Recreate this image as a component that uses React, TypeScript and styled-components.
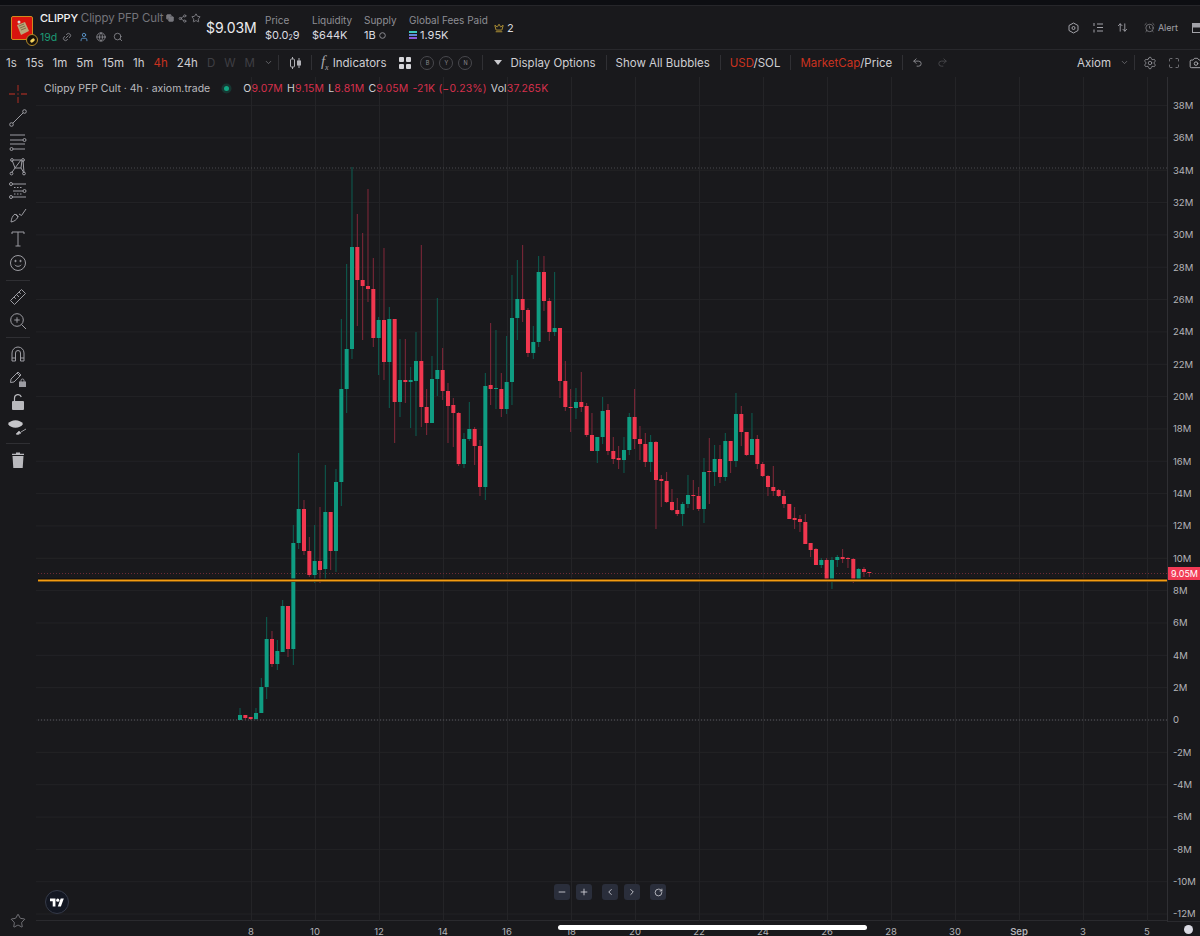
import styled, {createGlobalStyle} from "styled-components";
import {
    AlarmClock, ArrowUpDown, Camera, ChevronDown, ChevronLeft, ChevronRight, Copy, Crown, Globe, Link2,
    Maximize, Minus, Plus, RotateCw, Search, Settings, Share2, Star, Undo2, Redo2, User,
} from "lucide-react";
import {ReactNode} from "react";

const GlobalStyle = createGlobalStyle`
  html, body {
    margin: 0;
    padding: 0;
    background: #19191c;
  }

  body {
    font-family: "Inter", "Liberation Sans", sans-serif;
    overflow: hidden;
  }
`;

const StyledPage = styled.div`
  width: 1200px;
  height: 936px;
  display: flex;
  flex-direction: column;
  background: #19191c;
  color: #d6d6da;
  overflow: hidden;
  position: relative;
`;

const StyledTopStrip = styled.div`
  height: 6px;
  background: #0d0e12;
  border-bottom: 1px solid #26262a;
  box-sizing: border-box;
`;

const StyledHeader = styled.div`
  height: 44px;
  box-sizing: border-box;
  display: flex;
  align-items: center;
  padding-left: 11px;
  border-bottom: 1px solid #28282c;
`;

const StyledLogoWrap = styled.div`
  position: relative;
  width: 22px;
  height: 24px;
  margin-right: 7px;
  margin-top: 1px;
`;

const StyledLogoBadge = styled.div`
  position: absolute;
  right: -5px;
  bottom: -6px;
  width: 10px;
  height: 10px;
  border-radius: 50%;
  background: #18120a;
  border: 1px solid #b58a2a;
  display: flex;
  align-items: center;
  justify-content: center;

  &::after {
    content: "";
    width: 5px;
    height: 3px;
    border-radius: 2px;
    background: #f4d35e;
    transform: rotate(-40deg);
  }
`;

const StyledToken = styled.div`
  width: 166px;
  display: flex;
  flex-direction: column;
  gap: 5px;
`;

const StyledTokenRow = styled.div`
  display: flex;
  align-items: center;
  height: 14px;
  font-size: 11px;
  white-space: nowrap;
`;

const StyledTicker = styled.span`
  color: #f1f1f3;
  font-weight: 500;
  letter-spacing: -0.2px;
  margin-right: 3px;
`;

const StyledTokenName = styled.span`
  color: #74747a;
  margin-right: 2px;
  font-size: 11.5px;
  letter-spacing: -0.1px;
`;

const StyledAge = styled.span`
  color: #1c9c76;
  font-size: 10.5px;
  margin-right: 5px;
`;

const StyledTokenIcon = styled.span<{ $color?: string; $gap?: number }>`
  display: inline-flex;
  color: ${props => props.$color || "#8a8a90"};
  margin-right: ${props => props.$gap ?? 6}px;
`;

const StyledMarketCap = styled.div`
  width: 59px;
  font-size: 14px;
  color: #ececef;
  letter-spacing: -0.1px;
`;

const StyledStat = styled.div<{ $width: number }>`
  width: ${props => props.$width}px;
  display: flex;
  flex-direction: column;
  gap: 3px;
`;

const StyledStatLabel = styled.div`
  font-size: 10px;
  line-height: 12px;
  color: #8e8e94;
`;

const StyledStatValue = styled.div`
  font-size: 11px;
  line-height: 13px;
  color: #dcdce0;
  display: flex;
  align-items: center;
  gap: 3px;
  white-space: nowrap;

  sub {
    font-size: 7px;
    line-height: 0;
    margin: 0;
    vertical-align: -1px;
  }
`;

const StyledCrownCount = styled.div`
  display: flex;
  align-items: center;
  gap: 3px;
  font-size: 11px;
  color: #d8d8dc;
`;

const StyledHeaderRight = styled.div`
  margin-left: auto;
  display: flex;
  align-items: center;
  color: #a2a2a8;
  font-size: 9px;
  margin-right: -2px;
`;

const StyledHeaderIcon = styled.span<{ $gap: number }>`
  display: inline-flex;
  margin-right: ${props => props.$gap}px;
`;

const StyledToolbar = styled.div`
  height: 27px;
  box-sizing: border-box;
  padding: 0 0 2px 6px;
  display: flex;
  align-items: center;
  font-size: 11.5px;
  color: #cfcfd3;
  white-space: nowrap;
`;

const StyledIntervals = styled.div`
  display: flex;
  align-items: center;
  gap: 9px;
`;

const StyledInterval = styled.span<{ $state?: "active" | "dim" }>`
  color: ${props => props.$state === "active" ? "#c9321f" : props.$state === "dim" ? "#3f3f44" : "#cfcfd3"};
`;

const StyledSep = styled.span<{ $left: number; $right: number }>`
  width: 1px;
  height: 15px;
  background: #303034;
  margin: 0 ${props => props.$right}px 0 ${props => props.$left}px;
`;

const StyledFx = styled.span`
  font-family: "Liberation Serif", serif;
  font-style: italic;
  font-size: 15px;
  color: #a8a8ae;
  margin-right: 4px;
  line-height: 1;
`;

const StyledHotkey = styled.span`
  width: 14px;
  height: 14px;
  box-sizing: border-box;
  border: 1px solid #48484d;
  border-radius: 50%;
  font-size: 5.5px;
  color: #8b8b90;
  display: flex;
  align-items: center;
  justify-content: center;
  margin-right: 5px;
`;

const StyledCaret = styled.span`
  width: 0;
  height: 0;
  border-left: 4px solid transparent;
  border-right: 4px solid transparent;
  border-top: 5px solid #c9c9cd;
  margin-right: 8px;
`;

const StyledRed = styled.span`
  color: #c9321f;
`;

const StyledToolbarRight = styled.div`
  margin-left: auto;
  display: flex;
  align-items: center;
  margin-right: -3px;
`;

const StyledBody = styled.div`
  flex: 1;
  display: grid;
  grid-template-columns: 36px 1131px 33px;
  grid-template-rows: 844px 15px;
`;

const StyledRail = styled.div`
  grid-row: 1 / 3;
  display: flex;
  flex-direction: column;
  align-items: center;
  padding-top: 5px;
  color: #9c9ca2;
  position: relative;
`;

const StyledRailIcon = styled.div`
  width: 36px;
  height: 24.2px;
  display: flex;
  align-items: center;
  justify-content: center;
`;

const StyledRailSep = styled.div`
  width: 24px;
  height: 1px;
  background: #2f2f33;
  margin: 4px 0 4px;
`;

const StyledRailStar = styled.div`
  position: absolute;
  left: 10px;
  top: 836px;
  color: #9c9ca2;
  display: flex;
`;

const StyledPane = styled.div`
  position: relative;
  border-bottom: 1px solid #2a2a2e;
  box-sizing: content-box;

  svg.chart {
    display: block;
  }
`;

const StyledLegend = styled.div`
  position: absolute;
  left: 8px;
  top: 5px;
  display: flex;
  align-items: center;
  font-size: 10.5px;
  line-height: 13px;
  color: #b9b9be;
  white-space: nowrap;
`;

const StyledLegendDot = styled.span`
  width: 5px;
  height: 5px;
  border-radius: 50%;
  background: #12a582;
  box-shadow: 0 0 0 2.5px rgba(18, 165, 130, 0.22);
  margin: 0 14px 0 14px;
`;

const StyledOhlc = styled.span`
  color: #cfcfd3;
  margin-right: 4px;
  letter-spacing: 0.15px;

  b {
    color: #d5304c;
    font-weight: 400;
  }
`;

const StyledTvLogo = styled.div`
  position: absolute;
  left: 9px;
  top: 813px;
  width: 24px;
  height: 24px;
  box-sizing: border-box;
  border-radius: 50%;
  background: #131722;
  border: 1px solid #353a48;
  display: flex;
  align-items: center;
  justify-content: center;
`;

const StyledControls = styled.div`
  position: absolute;
  left: 518px;
  top: 807px;
  display: flex;
`;

const StyledControl = styled.div<{ $gap: number }>`
  width: 16px;
  height: 16px;
  border-radius: 3px;
  background: #2a2e3b;
  color: #d8d8de;
  display: flex;
  align-items: center;
  justify-content: center;
  margin-right: ${props => props.$gap}px;
`;

const StyledPriceAxis = styled.div`
  border-left: 1px solid #2f2f33;
  border-bottom: 1px solid #2a2a2e;
  padding-top: 12.3px;
  box-sizing: border-box;
  height: 845px;
  position: relative;
`;

const StyledPriceLabel = styled.div`
  height: 32.34px;
  display: flex;
  align-items: center;
  padding-left: 5px;
  font-size: 9.5px;
  color: #b4b4b8;
`;

const StyledPriceTag = styled.div`
  position: absolute;
  left: 0;
  top: 490px;
  width: 33px;
  height: 13px;
  background: #f23a55;
  color: #ffffff;
  font-size: 9px;
  display: flex;
  align-items: center;
  justify-content: center;
`;

const StyledTimeAxis = styled.div`
  display: flex;
  padding-left: 183px;
  margin-top: 1px;
`;

const StyledTimeLabel = styled.div<{ $bold?: boolean }>`
  width: 64px;
  flex-shrink: 0;
  text-align: center;
  font-size: 9.5px;
  line-height: 20px;
  color: #b4b4b8;
  font-weight: ${props => props.$bold ? 600 : 400};
`;

const StyledCorner = styled.div`
  display: flex;
  justify-content: center;
  padding-top: 4px;
  margin-left: 9px;
  width: 24px;

  &::after {
    content: "";
    width: 9px;
    height: 9px;
    border-radius: 50%;
    background: #d9d9e2;
  }
`;

const StyledHomeBar = styled.div`
  position: absolute;
  left: 558px;
  top: 925px;
  width: 309px;
  height: 5px;
  border-radius: 3px;
  background: #ffffff;
`;

// wick top, body top, body bottom, wick bottom (page pixels), 1 = up candle
const CANDLES: number[][] = [
    [708, 715, 720, 720, 1], [715, 715, 718, 720, 0], [717, 717, 719, 720, 0], [708, 713, 719, 720, 1],
    [678, 687, 713, 713, 1], [617, 639, 687, 699, 1], [631, 639, 664, 667, 0], [640, 651, 664, 670, 1],
    [600, 606, 652, 652, 1], [606, 606, 649, 657, 0], [525, 543, 649, 665, 1], [453, 509, 543, 549, 1],
    [500, 509, 551, 555, 0], [537, 551, 575, 577, 0], [525, 561, 575, 583, 1], [507, 561, 570, 583, 0],
    [465, 512, 569, 579, 1], [512, 512, 551, 570, 0], [469, 482, 551, 572, 1], [319, 389, 482, 506, 1],
    [264, 349, 389, 413, 1], [167, 247, 349, 359, 1], [214, 247, 280, 326, 0], [233, 280, 286, 340, 0],
    [189, 286, 289, 302, 0], [258, 289, 338, 347, 0], [317, 320, 338, 375, 1], [248, 320, 362, 380, 0],
    [307, 319, 362, 408, 1], [319, 319, 402, 443, 0], [339, 380, 402, 417, 1], [339, 380, 382, 403, 0],
    [367, 380, 382, 428, 1], [332, 361, 381, 436, 1], [245, 361, 407, 427, 0], [389, 407, 423, 435, 0],
    [356, 379, 423, 423, 1], [298, 370, 379, 396, 1], [348, 370, 391, 400, 0], [383, 391, 406, 443, 0],
    [398, 405, 413, 447, 0], [412, 413, 464, 466, 0], [433, 439, 464, 468, 1], [402, 429, 439, 441, 1],
    [427, 429, 446, 465, 0], [440, 446, 487, 496, 0], [373, 386, 487, 500, 1], [323, 385, 389, 405, 0],
    [330, 388, 389, 409, 1], [373, 389, 409, 417, 0], [336, 382, 409, 414, 1], [275, 318, 382, 405, 1],
    [260, 299, 318, 340, 1], [245, 299, 310, 322, 0], [308, 310, 353, 357, 0], [326, 342, 353, 359, 1],
    [256, 272, 342, 347, 1], [256, 272, 301, 311, 0], [298, 301, 332, 341, 0], [272, 328, 332, 336, 1],
    [328, 328, 381, 398, 0], [361, 381, 407, 411, 0], [389, 407, 408, 432, 0], [388, 402, 408, 419, 1],
    [372, 402, 407, 412, 0], [403, 406, 435, 437, 0], [413, 435, 451, 451, 0], [437, 437, 451, 463, 1],
    [397, 411, 437, 444, 1], [404, 410, 451, 455, 0], [437, 451, 459, 464, 0], [446, 458, 460, 469, 0],
    [437, 450, 460, 473, 1], [413, 417, 450, 455, 1], [389, 417, 439, 449, 0], [426, 439, 444, 460, 0],
    [433, 444, 462, 467, 0], [435, 442, 462, 472, 1], [441, 442, 480, 529, 0], [475, 479, 481, 507, 0],
    [472, 481, 502, 503, 0], [489, 502, 510, 511, 0], [498, 510, 514, 516, 0], [502, 504, 514, 526, 1],
    [475, 495, 504, 508, 1], [480, 495, 496, 510, 0], [487, 496, 509, 511, 0], [458, 472, 509, 523, 1],
    [438, 471, 472, 504, 0], [445, 459, 472, 486, 1], [445, 459, 477, 483, 0], [433, 441, 477, 481, 1],
    [441, 441, 461, 473, 0], [393, 414, 461, 467, 1], [406, 414, 432, 446, 0], [432, 432, 455, 456, 0],
    [413, 439, 455, 455, 1], [435, 439, 464, 469, 0], [462, 464, 476, 477, 0], [475, 476, 487, 496, 0],
    [466, 487, 491, 496, 0], [489, 490, 496, 497, 0], [490, 496, 504, 508, 0], [504, 504, 519, 519, 0],
    [507, 518, 520, 529, 0], [515, 519, 522, 532, 0], [514, 522, 544, 544, 0], [543, 543, 550, 557, 0],
    [548, 549, 565, 565, 0], [558, 560, 565, 568, 1], [558, 560, 581, 582, 0], [557, 560, 580, 589, 1],
    [555, 557, 560, 567, 1], [549, 557, 559, 563, 0], [557, 558, 559, 568, 0], [558, 559, 580, 583, 0],
    [568, 569, 579, 579, 1], [567, 569, 572, 577, 0], [572, 572, 573, 577, 0],
];

const PRICE_LEVELS = [38, 36, 34, 32, 30, 28, 26, 24, 22, 20, 18, 16, 14, 12, 10, 8, 6, 4, 2, 0, -2, -4, -6, -8, -10, -12];
const TIME_LABELS = ["8", "10", "12", "14", "16", "18", "20", "22", "24", "26", "28", "30", "Sep", "3", "5"];

function priceToY(million: number) {
    return 720 - million * 16.17;
}

function Chart() {
    return (
        <svg className="chart" width={1131} height={844} viewBox="36 77 1131 844">
            {PRICE_LEVELS.map(level => (
                <line key={level} x1={36} x2={1167} y1={priceToY(level)} y2={priceToY(level)} stroke="#232326"/>
            ))}
            {TIME_LABELS.map((label, i) => (
                <line key={label} x1={251.5 + i * 64} x2={251.5 + i * 64} y1={77} y2={921} stroke="#242427"/>
            ))}
            <line x1={38} x2={1167} y1={168} y2={168} stroke="#4a4a4e" strokeDasharray="1 2"/>
            <line x1={38} x2={1167} y1={720} y2={720} stroke="#5a5a5e" strokeDasharray="1 2"/>
            <line x1={38} x2={1167} y1={573.5} y2={573.5} stroke="#6b2a36" strokeDasharray="1 2"/>
            {CANDLES.map(([wickTop, bodyTop, bodyBottom, wickBottom, up], i) => {
                const x = 240 + i * 5.333;
                const color = up ? "#0f9d82" : "#f1374f";
                return (
                    <g key={i}>
                        <line x1={x} x2={x} y1={wickTop} y2={wickBottom} stroke={up ? "#0c5f52" : "#83283a"} strokeWidth={1}/>
                        <rect x={x - 2} y={bodyTop} width={4} height={Math.max(bodyBottom - bodyTop, 1)} fill={color}/>
                    </g>
                );
            })}
            <rect x={38} y={578.5} width={1129} height={3.5} fill="#0b0b0c"/>
            <line x1={38} x2={1167} y1={580.5} y2={580.5} stroke="#f39c12" strokeWidth={2}/>
        </svg>
    );
}

function RailSvg({children}: { children: ReactNode }) {
    return (
        <svg width={20} height={20} viewBox="0 0 20 20" fill="none" stroke="currentColor" strokeWidth={1}>
            {children}
        </svg>
    );
}

function Rail() {
    return (
        <StyledRail>
            <StyledRailIcon>
                <RailSvg>
                    <path d="M10 1v6M10 13v6M1 10h6M13 10h6" stroke="#8c2a22" strokeWidth={1.3}/>
                    <circle cx={10} cy={10} r={0.8} fill="#8c2a22" stroke="none"/>
                </RailSvg>
            </StyledRailIcon>
            <StyledRailIcon>
                <RailSvg>
                    <path d="M4.8 15.2 15.2 4.8"/>
                    <circle cx={3.5} cy={16.5} r={1.8}/>
                    <circle cx={16.5} cy={3.5} r={1.8}/>
                </RailSvg>
            </StyledRailIcon>
            <StyledRailIcon>
                <RailSvg>
                    <path d="M2 3h15M2 8h13M2 12h15M5 17h12"/>
                    <circle cx={16.5} cy={8} r={1.5}/>
                    <circle cx={3.5} cy={17} r={1.5}/>
                </RailSvg>
            </StyledRailIcon>
            <StyledRailIcon>
                <RailSvg>
                    <path d="M4 3 7 11 3.5 16M7 11l6-8M13 3l-7 0M15 3l1 13M14 3l-1 8 3 5M7 11h6"/>
                    <circle cx={4} cy={3} r={1.4}/>
                    <circle cx={15} cy={3} r={1.4}/>
                    <circle cx={3.5} cy={16.5} r={1.4}/>
                    <circle cx={16} cy={16.5} r={1.4}/>
                </RailSvg>
            </StyledRailIcon>
            <StyledRailIcon>
                <RailSvg>
                    <path d="M4 3h14M5 10h10M4 16h14" />
                    <path d="M6 6.5h9M6 13h9" strokeDasharray="1.5 1.5"/>
                    <circle cx={3} cy={3} r={1.5}/>
                    <circle cx={16.5} cy={10} r={1.5}/>
                    <circle cx={3} cy={16} r={1.5}/>
                </RailSvg>
            </StyledRailIcon>
            <StyledRailIcon>
                <RailSvg>
                    <path d="M3 17c.5-3 1-6 4-8l3 3c-1.500 3-4 4.500-7 5Z"/>
                    <path d="M8 9.500c1 .3 2 1.300 2.500 2.200M11 9l2.500 1.500L18 4"/>
                </RailSvg>
            </StyledRailIcon>
            <StyledRailIcon>
                <RailSvg>
                    <path d="M4 5V3h12v2M10 3v14M7.500 17h5"/>
                </RailSvg>
            </StyledRailIcon>
            <StyledRailIcon>
                <RailSvg>
                    <circle cx={10} cy={10} r={7.5}/>
                    <path d="M6.800 11.800c1.500 2 4.900 2 6.400 0"/>
                    <circle cx={7.500} cy={8} r={0.7} fill="currentColor"/>
                    <circle cx={12.500} cy={8} r={0.7} fill="currentColor"/>
                </RailSvg>
            </StyledRailIcon>
            <StyledRailSep/>
            <StyledRailIcon>
                <RailSvg>
                    <path d="M2.500 13.500 13.500 2.500l4 4-11 11Z"/>
                    <path d="M6 10l1.800 1.800M8.500 7.500l2.500 2.500M11 5l1.800 1.800"/>
                </RailSvg>
            </StyledRailIcon>
            <StyledRailIcon>
                <RailSvg>
                    <circle cx={9} cy={9} r={6.300}/>
                    <path d="M13.500 13.500 18 18M9 6.300v5.400M6.300 9h5.400"/>
                </RailSvg>
            </StyledRailIcon>
            <StyledRailSep/>
            <StyledRailIcon>
                <RailSvg>
                    <path d="M4 17V9a6 6 0 0 1 12 0v8h-3.500V9a2.500 2.500 0 0 0-5 0v8ZM4 14h3.500M12.500 14H16"/>
                </RailSvg>
            </StyledRailIcon>
            <StyledRailIcon>
                <RailSvg>
                    <path d="M2.500 14.500 3 11 10 4l3 3-7 7ZM9 5l3 3"/>
                    <rect x={11.500} y={14} width={6} height={4.500} fill="currentColor"/>
                    <path d="M13 14v-1.500a1.500 1.500 0 0 1 3 0V14"/>
                </RailSvg>
            </StyledRailIcon>
            <StyledRailIcon>
                <svg width={20} height={20} viewBox="0 0 20 20" fill="#b9b9bd">
                    <rect x={4} y={9} width={12} height={9} rx={1}/>
                    <path d="M6.500 9V6a3.500 3.500 0 0 1 6.800-1" fill="none" stroke="#b9b9bd" strokeWidth={1.200}/>
                </svg>
            </StyledRailIcon>
            <StyledRailIcon>
                <svg width={22} height={20} viewBox="0 0 22 20" fill="#c6c6ca">
                    <path d="M1 7c3-5 12-5 15 0-3 5-12 5-15 0Z"/>
                    <path d="M9 17l3-3 2 2-3 1.500ZM14 15l5-3" stroke="#9a9a9e" strokeWidth={1}/>
                </svg>
            </StyledRailIcon>
            <StyledRailSep/>
            <StyledRailIcon>
                <svg width={20} height={20} viewBox="0 0 20 20" fill="#b9b9bd">
                    <path d="M4.500 6h11l-.8 12H5.300ZM4 3.800h4V2.500h4v1.300h4V5H4Z"/>
                </svg>
            </StyledRailIcon>
            <StyledRailStar>
                <Star size={16} strokeWidth={1}/>
            </StyledRailStar>
        </StyledRail>
    );
}

function TokenLogo() {
    return (
        <StyledLogoWrap>
            <svg width={22} height={24} viewBox="0 0 22 24">
                <rect x={0.500} y={0.500} width={21} height={23} rx={1.500} fill="#d9140e" stroke="#d08a1e"/>
                <path d="M6 9 14 6l4 9-8 4Z" fill="#b9a77a"/>
                <path d="M8 10l5-2M9 12l5-2M10 14l5-2" stroke="#6d5f3e" strokeWidth={0.800}/>
                <circle cx={8} cy={6} r={1.500} fill="#d8d8d8"/>
            </svg>
            <StyledLogoBadge/>
        </StyledLogoWrap>
    );
}

function Header() {
    return (
        <StyledHeader>
            <TokenLogo/>
            <StyledToken>
                <StyledTokenRow>
                    <StyledTicker>CLIPPY</StyledTicker>
                    <StyledTokenName>Clippy PFP Cult</StyledTokenName>
                    <StyledTokenIcon $gap={4}><Copy size={8} fill="#77777d"/></StyledTokenIcon>
                    <StyledTokenIcon $gap={4}><Share2 size={9}/></StyledTokenIcon>
                    <StyledTokenIcon><Star size={10}/></StyledTokenIcon>
                </StyledTokenRow>
                <StyledTokenRow>
                    <StyledAge>19d</StyledAge>
                    <StyledTokenIcon $gap={7}><Link2 size={10} style={{transform: "rotate(-45deg)"}}/></StyledTokenIcon>
                    <StyledTokenIcon $color="#5f9fd8" $gap={7}><User size={10}/></StyledTokenIcon>
                    <StyledTokenIcon $gap={7}><Globe size={10}/></StyledTokenIcon>
                    <StyledTokenIcon><Search size={10}/></StyledTokenIcon>
                </StyledTokenRow>
            </StyledToken>
            <StyledMarketCap>$9.03M</StyledMarketCap>
            <StyledStat $width={47}>
                <StyledStatLabel>Price</StyledStatLabel>
                <StyledStatValue><span>$0.0<sub>2</sub>9</span></StyledStatValue>
            </StyledStat>
            <StyledStat $width={52}>
                <StyledStatLabel>Liquidity</StyledStatLabel>
                <StyledStatValue>$644K</StyledStatValue>
            </StyledStat>
            <StyledStat $width={45}>
                <StyledStatLabel>Supply</StyledStatLabel>
                <StyledStatValue>1B <svg width={7} height={7} viewBox="0 0 7 7"><circle cx={3.500} cy={3.500} r={2.800} fill="none" stroke="#8a8a90"/></svg></StyledStatValue>
            </StyledStat>
            <StyledStat $width={85}>
                <StyledStatLabel>Global Fees Paid</StyledStatLabel>
                <StyledStatValue>
                    <svg width={8} height={8} viewBox="0 0 8 8">
                        <path d="M0 0h8v2H0Z" fill="#3fc7c0"/>
                        <path d="M0 3h8v2H0Z" fill="#5f86d8"/>
                        <path d="M0 6h8v2H0Z" fill="#8a5ad8"/>
                    </svg>
                    1.95K
                </StyledStatValue>
            </StyledStat>
            <StyledCrownCount><Crown size={10} color="#c9a63a"/>2</StyledCrownCount>
            <StyledHeaderRight>
                <StyledHeaderIcon $gap={14}>
                    <svg width={11} height={12} viewBox="0 0 11 12" fill="none" stroke="currentColor">
                        <path d="M5.500 1 10 3.500v5L5.500 11 1 8.500v-5Z"/>
                        <circle cx={5.500} cy={6} r={1.500}/>
                    </svg>
                </StyledHeaderIcon>
                <StyledHeaderIcon $gap={14}>
                    <svg width={10} height={11} viewBox="0 0 10 11" fill="none" stroke="currentColor">
                        <path d="M4 2h6M4 5.500h6M4 9h6M1 1v3M1 7.500v3"/>
                    </svg>
                </StyledHeaderIcon>
                <StyledHeaderIcon $gap={16}><ArrowUpDown size={11}/></StyledHeaderIcon>
                <StyledHeaderIcon $gap={3}><AlarmClock size={11} strokeWidth={1.300}/></StyledHeaderIcon>
                <StyledHeaderIcon $gap={14}>Alert</StyledHeaderIcon>
                <StyledHeaderIcon $gap={0}>
                    <svg width={10} height={10} viewBox="0 0 10 10">
                        <rect x={0.500} y={0.500} width={9} height={9} fill="#19191c" stroke="#a2a2a8"/>
                        <rect x={0.500} y={0.500} width={9} height={4} fill="#a2a2a8"/>
                    </svg>
                </StyledHeaderIcon>
            </StyledHeaderRight>
        </StyledHeader>
    );
}

function Toolbar() {
    return (
        <StyledToolbar>
            <StyledIntervals>
                <StyledInterval>1s</StyledInterval>
                <StyledInterval>15s</StyledInterval>
                <StyledInterval>1m</StyledInterval>
                <StyledInterval>5m</StyledInterval>
                <StyledInterval>15m</StyledInterval>
                <StyledInterval>1h</StyledInterval>
                <StyledInterval $state="active">4h</StyledInterval>
                <StyledInterval>24h</StyledInterval>
                <StyledInterval $state="dim">D</StyledInterval>
                <StyledInterval $state="dim">W</StyledInterval>
                <StyledInterval $state="dim">M</StyledInterval>
            </StyledIntervals>
            <ChevronDown size={9} color="#77777c" style={{marginLeft: 9}}/>
            <StyledSep $left={5} $right={10}/>
            <svg width={14} height={14} viewBox="0 0 14 14" fill="none" stroke="#b0b0b5">
                <path d="M3.500 1v2M3.500 11v2M10 2v3M10 9v3"/>
                <rect x={1.500} y={3} width={4} height={8} rx={1}/>
                <rect x={8.500} y={5} width={3} height={4} fill="#b0b0b5"/>
            </svg>
            <StyledSep $left={8} $right={9}/>
            <StyledFx>f<sub style={{fontSize: 8}}>x</sub></StyledFx>
            <span>Indicators</span>
            <svg width={12} height={12} viewBox="0 0 12 12" fill="#d6d6da" style={{margin: "0 9px 0 13px"}}>
                <rect width={5} height={5} rx={1}/>
                <rect x={7} width={5} height={5} rx={1}/>
                <rect y={7} width={5} height={5} rx={1}/>
                <rect x={7} y={7} width={5} height={5} rx={1}/>
            </svg>
            <StyledHotkey>B</StyledHotkey>
            <StyledHotkey>Y</StyledHotkey>
            <StyledHotkey>N</StyledHotkey>
            <StyledSep $left={5} $right={11}/>
            <StyledCaret/>
            <span>Display Options</span>
            <StyledSep $left={10} $right={9}/>
            <span>Show All Bubbles</span>
            <StyledSep $left={10} $right={9}/>
            <span><StyledRed>USD</StyledRed>/SOL</span>
            <StyledSep $left={10} $right={9}/>
            <span><StyledRed>MarketCap</StyledRed>/Price</span>
            <StyledSep $left={10} $right={9}/>
            <Undo2 size={11} color="#8c8c92" style={{marginLeft: 0, marginRight: 14}}/>
            <Redo2 size={11} color="#48484c"/>
            <StyledToolbarRight>
                <span>Axiom</span>
                <ChevronDown size={9} color="#77777c" style={{margin: "0 5px 0 9px"}}/>
                <StyledSep $left={0} $right={8}/>
                <Settings size={14} strokeWidth={1.200} color="#a8a8ae" style={{marginRight: 11}}/>
                <Maximize size={12} strokeWidth={1.200} color="#a8a8ae" style={{marginRight: 9}}/>
                <Camera size={14} strokeWidth={1.500} color="#b8b8bd"/>
            </StyledToolbarRight>
        </StyledToolbar>
    );
}

function App() {
    return (
        <StyledPage>
            <GlobalStyle/>
            <StyledTopStrip/>
            <Header/>
            <Toolbar/>
            <StyledBody>
                <Rail/>
                <StyledPane>
                    <Chart/>
                    <StyledLegend>
                        <span>Clippy PFP Cult · 4h · axiom.trade</span>
                        <StyledLegendDot/>
                        <StyledOhlc>O<b>9.07M</b></StyledOhlc>
                        <StyledOhlc>H<b>9.15M</b></StyledOhlc>
                        <StyledOhlc>L<b>8.81M</b></StyledOhlc>
                        <StyledOhlc>C<b>9.05M</b></StyledOhlc>
                        <StyledOhlc><b>-21K (−0.23%)</b></StyledOhlc>
                        <StyledOhlc>Vol<b>37.265K</b></StyledOhlc>
                    </StyledLegend>
                    <StyledTvLogo>
                        <svg width={14} height={11} viewBox="0 0 36 28" fill="#ffffff">
                            <path d="M14 24H7V11H0V4h14v20ZM28 24h-8l7.500-20h8L28 24Z"/>
                            <circle cx={20} cy={8} r={4}/>
                        </svg>
                    </StyledTvLogo>
                    <StyledControls>
                        <StyledControl $gap={6}><Minus size={10} strokeWidth={2}/></StyledControl>
                        <StyledControl $gap={10}><Plus size={10} strokeWidth={2}/></StyledControl>
                        <StyledControl $gap={6}><ChevronLeft size={10} strokeWidth={2}/></StyledControl>
                        <StyledControl $gap={10}><ChevronRight size={10} strokeWidth={2}/></StyledControl>
                        <StyledControl $gap={0}><RotateCw size={9} strokeWidth={2}/></StyledControl>
                    </StyledControls>
                </StyledPane>
                <StyledPriceAxis>
                    {PRICE_LEVELS.map(level => (
                        <StyledPriceLabel key={level}>{level === 0 ? "0" : `${level}M`}</StyledPriceLabel>
                    ))}
                    <StyledPriceTag>9.05M</StyledPriceTag>
                </StyledPriceAxis>
                <StyledTimeAxis>
                    {TIME_LABELS.map(label => (
                        <StyledTimeLabel key={label} $bold={label === "Sep"}>{label}</StyledTimeLabel>
                    ))}
                </StyledTimeAxis>
                <StyledCorner/>
            </StyledBody>
            <StyledHomeBar/>
        </StyledPage>
    );
}

export default App;
